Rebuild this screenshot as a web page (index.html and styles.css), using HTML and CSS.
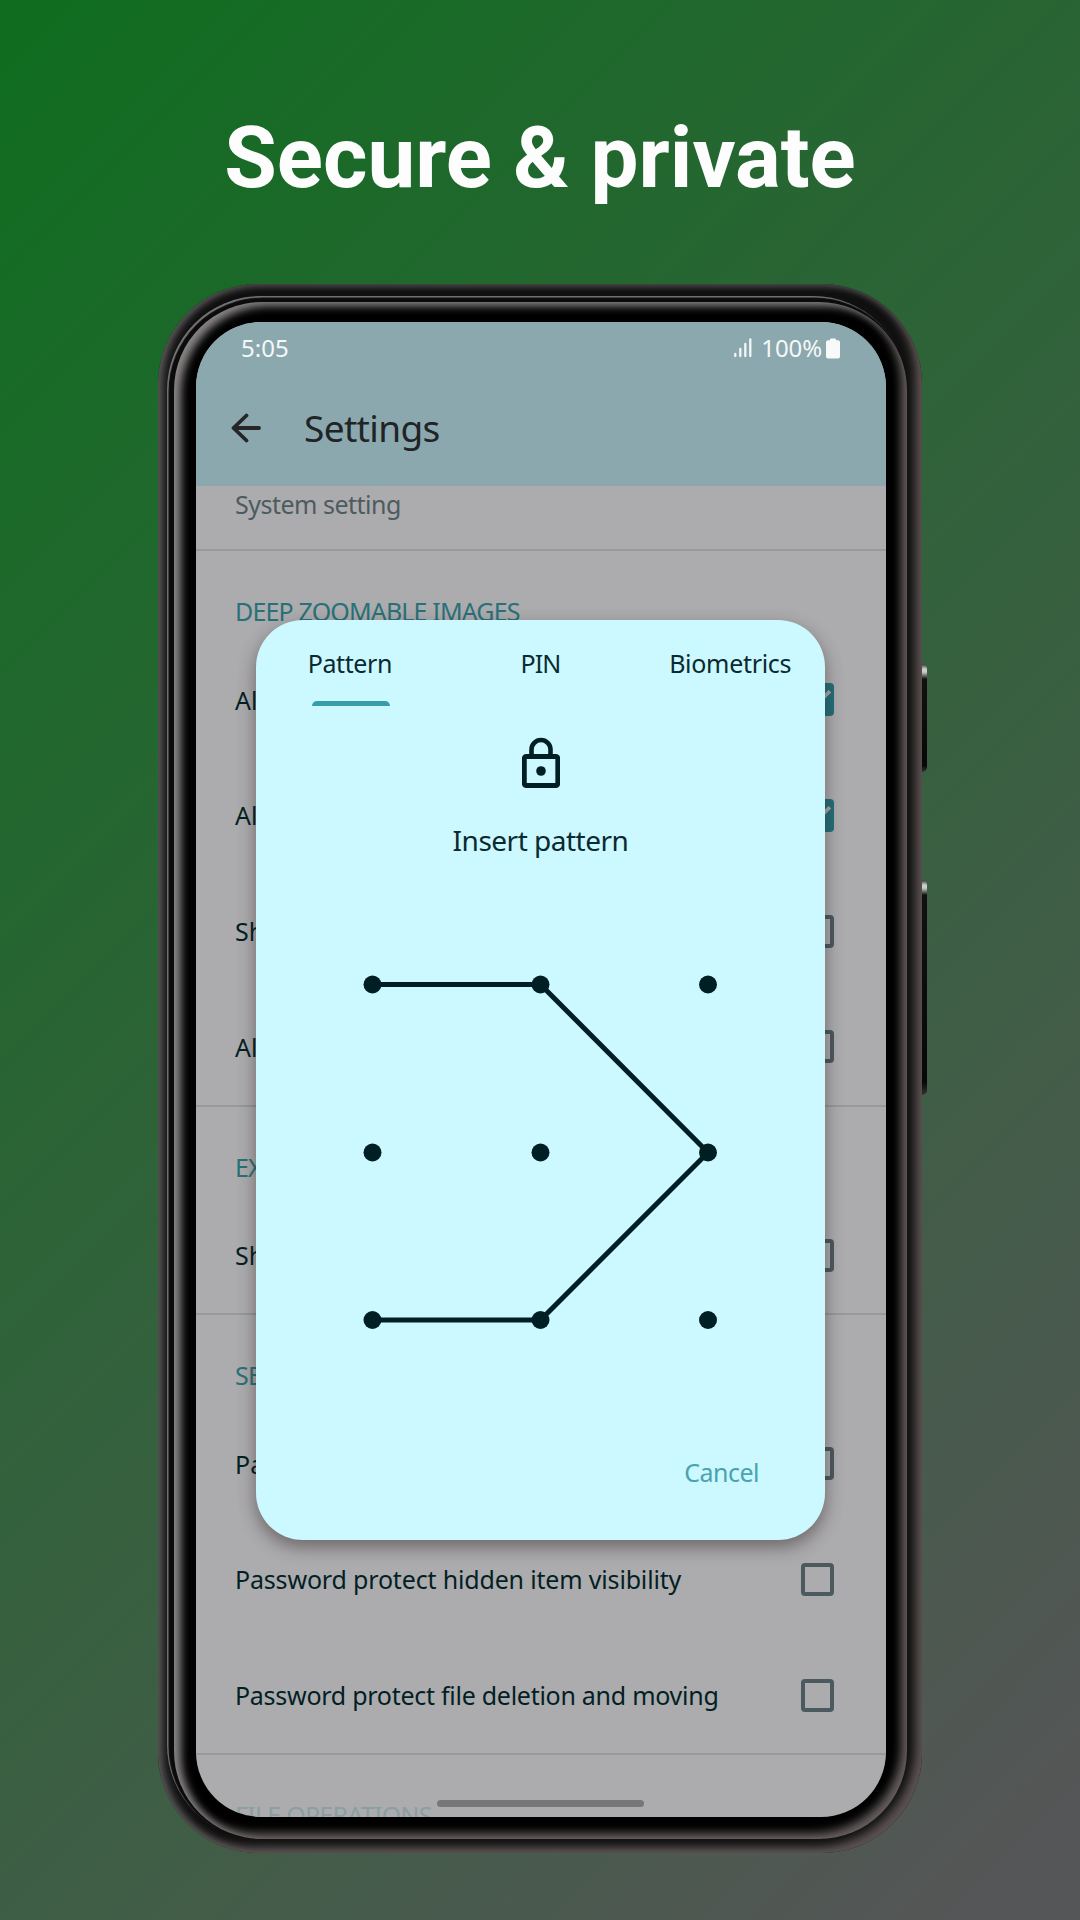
FILE: index.html
```html
<!DOCTYPE html>
<html lang="en">
<head>
<meta charset="utf-8">
<title>Secure &amp; private</title>
<link rel="stylesheet" href="styles.css">
</head>
<body>
<main class="promo">
  <h1 class="headline">Secure &amp; private</h1>
  <div class="phone">
    <span class="key key-power"></span>
    <span class="key key-volume"></span>
    <div class="bezel-mid"><div class="bezel">
      <div class="screen">
        <header class="topbar">
          <div class="status">
            <span class="clock">5:05</span>
            <svg class="signal" viewBox="0 0 18 20"><path d="M1.300 16v2M6.300 11v7M11.300 6v12M16.300 1.300v16.700" stroke="#f4f7f8" stroke-width="2.300" stroke-linecap="round"/></svg>
            <span class="percent">100%</span>
            <svg class="battery" viewBox="0 0 14 21"><path d="M4 2.200V1.500Q4 .5 5 .5h4q1 0 1 1v.7h2q2 0 2 2v14.300q0 2-2 2H2q-2 0-2-2V4.200q0-2 2-2z" fill="#f7faf9"/></svg>
          </div>
          <div class="title-row">
            <svg class="back" viewBox="0 0 30 30"><path d="M28 15H3M15.500 2.500L2.500 15l13 12.500" fill="none" stroke="#242628" stroke-width="3.800" stroke-linecap="round" stroke-linejoin="round"/></svg>
            <span class="title">Settings</span>
          </div>
        </header>
        <div class="settings">
          <section class="group group-first"><p class="summary">System setting</p></section>
          <section class="group">
            <h2 class="group-title">DEEP ZOOMABLE IMAGES</h2>
            <div class="option"><span>Al</span><i class="check on"><svg viewBox="0 0 32 32"><path d="M5 16l7.500 7.500L28 8" fill="none" stroke="#acacae" stroke-width="3.600"/></svg></i></div>
            <div class="option"><span>Al</span><i class="check on"><svg viewBox="0 0 32 32"><path d="M5 16l7.500 7.500L28 8" fill="none" stroke="#acacae" stroke-width="3.600"/></svg></i></div>
            <div class="option"><span>Sh</span><i class="check"></i></div>
            <div class="option"><span>Al</span><i class="check"></i></div>
          </section>
          <section class="group">
            <h2 class="group-title">EX</h2>
            <div class="option"><span>Sh</span><i class="check"></i></div>
          </section>
          <section class="group">
            <h2 class="group-title">SE</h2>
            <div class="option"><span>Pa</span><i class="check"></i></div>
            <div class="option"><span class="hidden-item">Password protect hidden item visibility</span><i class="check"></i></div>
            <div class="option"><span class="deletion">Password protect file deletion and moving</span><i class="check"></i></div>
          </section>
          <section class="group">
            <h2 class="group-title faded">FILE OPERATIONS</h2>
          </section>
        </div>
        <span class="home-handle"></span>
        <div class="dialog">
          <nav class="tabs">
            <span class="tab active"><span class="t-pattern">Pattern</span></span>
            <span class="tab"><span class="t-pin">PIN</span></span>
            <span class="tab"><span class="t-bio">Biometrics</span></span>
          </nav>
          <svg class="lock" viewBox="0 0 38 51"><path d="M9.500 19V12.500a9.500 9.500 0 0 1 19 0V19" fill="none" stroke="#001f24" stroke-width="4.600"/><rect x="2.300" y="19.500" width="33.500" height="29" rx="2" fill="none" stroke="#001f24" stroke-width="4.900"/><circle cx="19" cy="34" r="4.800" fill="#001f24"/></svg>
          <p class="prompt">Insert pattern</p>
          <svg class="pattern" viewBox="0 0 356 356"><path d="M9.500 10.500H177.500L345 178.500L177.500 346H9.500" fill="none" stroke="#001f24" stroke-width="5"/><g fill="#001f24"><circle cx="9.500" cy="10.500" r="9"/><circle cx="177.500" cy="10.500" r="9"/><circle cx="345" cy="10.500" r="9"/><circle cx="9.500" cy="178.500" r="9"/><circle cx="177.500" cy="178.500" r="9"/><circle cx="345" cy="178.500" r="9"/><circle cx="9.500" cy="346" r="9"/><circle cx="177.500" cy="346" r="9"/><circle cx="345" cy="346" r="9"/></g></svg>
          <span class="cancel">Cancel</span>
        </div>
      </div>
    </div></div>
  </div>
</main>
</body>
</html>
```
FILE: styles.css
```css
* { box-sizing: border-box; }
body { margin: 0; font-family: "Noto Sans", "Open Sans", sans-serif; }
.promo {
  width: 1080px; height: 1920px; overflow: hidden;
  display: flex; flex-direction: column; align-items: center;
  background: linear-gradient(135deg, #106d20 2%, #555657 96%);
}
.headline {
  margin: 0; padding-top: 108px; height: 284px;
  font: 700 85.400px/100px Roboto, sans-serif; color: #fdfdfd; white-space: nowrap;
}
.phone {
  position: relative; width: 764px; height: 1569px; padding: 12px 15px 14px 9px;
  border-radius: 100px; background: #101010;
  box-shadow: inset 6px 0 8px -1px #5a5858, inset -8px -7px 10px -1px #5c5252, inset 0 5px 6px -2px #3c3c3c;
}
.key { position: absolute; left: 764px; width: 5px; border-radius: 0 5px 5px 0; background: linear-gradient(#333, #ccc 5px, #ccc 8px, #111 15px, #080808 94%, #333); }
.key-power { top: 380px; height: 108px; }
.key-volume { top: 596px; height: 215px; }
.bezel-mid { height: 100%; padding: 6px 0 0 7px; border-radius: 94px; background: #0b0b0b; box-shadow: inset 1.500px 1.500px 1px #777; }
.bezel {
  height: 100%; padding: 20px 20px 22px 22px; border-radius: 88px; background: #000;
  box-shadow: inset 7px 4px 9px #8a8686, inset -6px -6px 10px #655d5d;
}
.screen { position: relative; width: 690px; height: 1495px; overflow: hidden; border-radius: 65px; background: #acacae; }
.topbar { height: 164px; background: #8ba8ae; }
.status { display: flex; align-items: center; height: 52px; padding: 0 46px 0 45px; color: #f5f8f8; font-size: 24px; line-height: 52px; }
.clock { margin-right: auto; }
.signal { width: 18px; height: 20px; margin-right: 9px; }
.percent { letter-spacing: -.1px; }
.battery { width: 14px; height: 21px; margin-left: 4px; }
.title-row { display: flex; align-items: center; gap: 43px; height: 107px; padding-left: 35px; }
.back { width: 30px; height: 30px; }
.title { font-size: 37px; letter-spacing: -.65px; color: #212426; }
.settings { color: #041f24; font-size: 25px; }
.group { border-bottom: 2px solid #97999b; }
.group:last-child { border: 0; }
.group-first { height: 65px; }
.summary { margin: 0; padding: 0 0 0 39px; line-height: 36px; letter-spacing: -.5px; color: #4c5b60; }
.group-title { margin: 0; padding: 42px 0 0 39px; height: 90.800px; font-size: 25px; font-weight: 400; line-height: 36px; letter-spacing: -.85px; color: #297179; }
.faded { letter-spacing: -.75px; color: #8b9ea2; }
.option { display: flex; align-items: center; justify-content: space-between; height: 115.700px; padding: 0 52.500px 0 39px; white-space: nowrap; }
.hidden-item { letter-spacing: -.17px; }
.deletion { letter-spacing: -.27px; }
.check { display: block; width: 33px; height: 33px; border: 4px solid #4a5a5f; border-radius: 4px; }
.check.on { border: 0; background: #246f79; }
.check svg { display: block; }
.home-handle { position: absolute; left: 241px; top: 1478px; width: 207px; height: 7px; border-radius: 4px; background: #777; }
.dialog {
  position: absolute; left: 60px; top: 298px; width: 569px; height: 920px;
  display: flex; flex-direction: column; align-items: center;
  border-radius: 47px; background: #ccf8ff; color: #0a2a30;
  box-shadow: 0 7px 18px rgba(40, 25, 25, .48);
}
.tabs { display: flex; width: 100%; height: 87px; font-size: 25px; line-height: 87px; }
.tab { flex: 1; text-align: center; position: relative; }
.t-pattern { letter-spacing: -.4px; margin-right: 2px; }
.t-pin { letter-spacing: -.9px; }
.t-bio { letter-spacing: -.3px; }
.tab.active::after { content: ""; position: absolute; left: 55.500px; bottom: 1px; width: 78px; height: 5px; border-radius: 5px 5px 0 0; background: #379da8; }
.lock { width: 38px; height: 51px; margin-top: 30px; }
.prompt { margin: 32px 0 2px; font-size: 28px; line-height: 40px; letter-spacing: -.5px; }
.pattern { width: 356px; height: 356px; margin-top: 112px; }
.cancel { align-self: flex-end; margin: 124px 66px 0 0; font-size: 25px; line-height: 36px; letter-spacing: -.5px; color: #4aa3ad; }
```
